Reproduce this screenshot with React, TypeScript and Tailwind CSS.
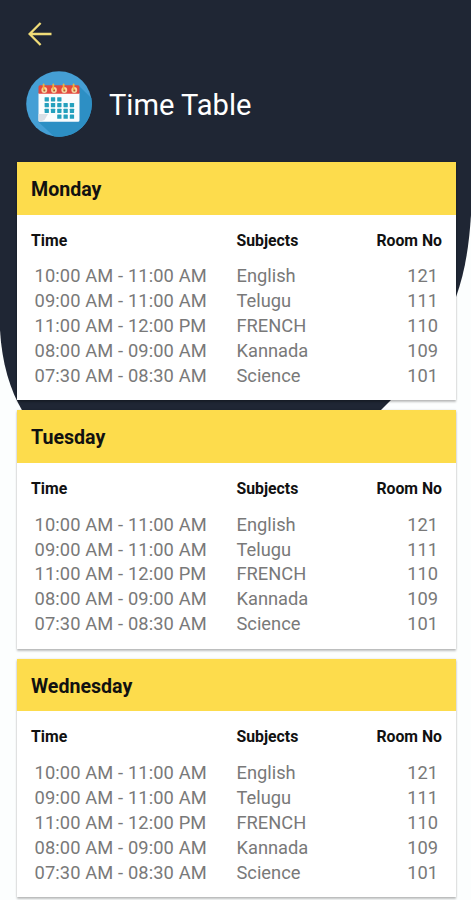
import type { ReactNode } from "react";

type Period = { time: string; subject: string; room: string };

const periods: Period[] = [
  { time: "10:00 AM - 11:00 AM", subject: "English", room: "121" },
  { time: "09:00 AM - 11:00 AM", subject: "Telugu", room: "111" },
  { time: "11:00 AM - 12:00 PM", subject: "FRENCH", room: "110" },
  { time: "08:00 AM - 09:00 AM", subject: "Kannada", room: "109" },
  { time: "07:30 AM - 08:30 AM", subject: "Science", room: "101" },
];

const days = ["Monday", "Tuesday", "Wednesday"];

// column/row of every day cell on the calendar icon
const cells = [
  [0, 0], [1, 0], [2, 0],
  [0, 1], [1, 1], [2, 1], [3, 1], [4, 1],
  [0, 2], [1, 2], [2, 2], [3, 2], [4, 2],
  [2, 3], [3, 3], [4, 3],
];

const BackArrow = () => (
  <svg width="24" height="24" viewBox="0 0 24 24" fill="none" stroke="#f0dc78" strokeWidth={2.3} className="block">
    <path d="M23.5 12H1.6M12.6 1L1.6 12l11 11" />
  </svg>
);

const CalendarIcon = () => (
  <svg width="66" height="66" viewBox="0 0 66 66" className="block">
    <circle cx="33" cy="33" r="32.8" fill="#459fd5" />
    <path d="M53 15L65.3 27A32.8 32.8 0 0 1 28 65.4L12.5 51z" fill="#2d8fc4" />
    <path d="M12.5 22h41v27.2a1.5 1.5 0 0 1-1.5 1.5H14a1.5 1.5 0 0 1-1.5-1.5z" fill="#fafcfd" />
    <path d="M12.5 43h9.5l-3.5 6-4.5 1.7a1.5 1.5 0 0 1-1.5-1.5z" fill="#d9dfe6" />
    <path d="M14 14.2h38a1.5 1.5 0 0 1 1.5 1.5v7h-41v-7a1.5 1.5 0 0 1 1.5-1.5z" fill="#e2483f" />
    {[18.3, 28, 38.3, 48.3].map((x) => (
      <g key={x}>
        <circle cx={x} cy="19" r="2.9" fill="#f4d7a4" />
        <circle cx={x} cy="19.4" r="1.1" fill="#b5502f" />
        <path d={`M${x - 0.7} 18.5v-5`} stroke="#eeb33b" strokeWidth={1.8} strokeLinecap="round" />
      </g>
    ))}
    {cells.map(([c, r]) => (
      <rect key={`${c}-${r}`} x={18.6 + c * 6.3} y={26.2 + r * 5.8} width="4.3" height="4.2" rx="0.4" fill="#25a0bd" />
    ))}
  </svg>
);

const Row = ({ children, className }: { children: ReactNode; className: string }) => (
  <div className={`flex whitespace-nowrap ${className}`}>{children}</div>
);

function DayCard({ day }: { day: string }) {
  return (
    <section className="h-[238.4px] shrink-0 bg-white shadow-[0_2px_2px_rgba(0,0,0,0.24),0_0_2px_rgba(0,0,0,0.12)]">
      <h2 className="flex h-[52.5px] items-center bg-[#fddc4c] pl-3.5 pt-[3px] text-[19.6px] font-bold text-[#111111]">{day}</h2>
      <Row className="h-[49px] items-center pl-3.5 pr-3.5 pt-[3px] text-[15.8px] font-bold text-[#111111]">
        <span className="w-[205.5px]">Time</span>
        <span className="flex-1">Subjects</span>
        <span>Room No</span>
      </Row>
      {periods.map((p) => (
        <Row key={p.time} className="h-[24.9px] items-center pl-[17.5px] pr-[18px] text-[18.3px] text-[#797979]">
          <span className="w-[202px] tracking-[0.12px]">{p.time}</span>
          <span className="flex-1">{p.subject}</span>
          <span>{p.room}</span>
        </Row>
      ))}
    </section>
  );
}

export default function App() {
  return (
    <div className="relative h-[900px] w-[471px] overflow-hidden bg-[#fcfefe] font-[Roboto,sans-serif]">
      <svg width="471" height="412" viewBox="0 0 471 412" className="absolute left-0 top-0">
        <path d="M0 0H471V215C469 246 465 272 456 297C441 338 420 371 390 401L379 412H23C10 390 2 364 0 330Z" fill="#1f2634" />
      </svg>

      <div className="relative flex h-full flex-col">
        <header className="h-[162px] shrink-0 pl-[26px] pt-[22px]">
          <button className="block cursor-pointer pl-[2px]" aria-label="Back">
            <BackArrow />
          </button>
          <div className="mt-[25px] flex items-center gap-[17px]">
            <CalendarIcon />
            <h1 className="pt-0.5 text-[29.1px] leading-8 text-white">Time Table</h1>
          </div>
        </header>

        <main className="flex flex-col gap-[10px] pl-[17px] pr-[15px]">
          {days.map((day) => (
            <DayCard key={day} day={day} />
          ))}
        </main>
      </div>
    </div>
  );
}
